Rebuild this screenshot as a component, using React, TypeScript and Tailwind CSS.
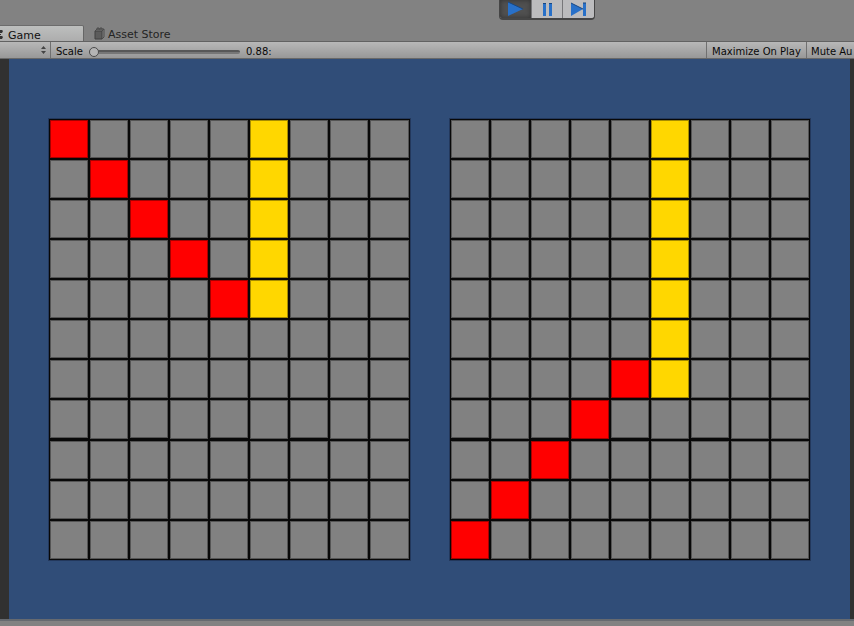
import { useState } from "react";

type Cell = "empty" | "red" | "yellow";

const COLUMNS = 9;
const ROWS = 11;

const fills: Record<Cell, string> = {
  empty: "bg-[#818181]",
  red: "bg-[#ff0000]",
  yellow: "bg-[#ffd700]",
};

function leftCell(row: number, col: number): Cell {
  if (col === 5 && row < 5) return "yellow";
  return row === col && row < 5 ? "red" : "empty";
}

function rightCell(row: number, col: number): Cell {
  if (col === 5 && row < 7) return "yellow";
  return row + col === 10 && col < 5 ? "red" : "empty";
}

function Board({ cellAt }: { cellAt: (row: number, col: number) => Cell }) {
  return (
    <div className="grid min-w-0 flex-1 grid-cols-9 bg-[#080808] outline outline-[#1b2c49]/60">
      {Array.from({ length: ROWS * COLUMNS }, (_, i) => (
        <div
          key={i}
          className={`aspect-square border border-[#080808] inset-shadow-[0_0_0_1px_rgba(0,0,0,0.35)] ${fills[cellAt(Math.floor(i / COLUMNS), i % COLUMNS)]}`}
        />
      ))}
    </div>
  );
}

function PlayControls() {
  return (
    <div className="ml-[499px] flex h-5 w-24 overflow-hidden rounded-b-sm border-x border-b-2 border-[#454545] bg-[#bcbcbe]">
      <button aria-label="Play" className="flex flex-1 justify-center bg-[#505050] inset-shadow-[0_0_5px_#303030]">
        <svg width="16" height="18" viewBox="0 0 16 18">
          <path d="M1 2 16 9 1 16Z" fill="#2870c8" />
          <path d="M1 2 16 9" stroke="#174782" />
        </svg>
      </button>
      <button aria-label="Pause" className="flex flex-1 justify-center border-l border-[#77777a]">
        <svg width="10" height="18" viewBox="0 0 10 18">
          <path d="M1 3h3v13H1ZM7 3h3v13H7Z" fill="#2870c8" />
          <path d="M1 3h3v1H1ZM7 3h3v1H7Z" fill="#174782" />
        </svg>
      </button>
      <button aria-label="Step" className="flex flex-1 justify-center border-l border-[#77777a]">
        <svg width="16" height="18" viewBox="0 0 16 18">
          <path d="M0 3 12 9 0 16ZM12 3h3v13h-3Z" fill="#2870c8" />
          <path d="M0 3 12 9M12 3h3" stroke="#174782" />
        </svg>
      </button>
    </div>
  );
}

function Tabs() {
  return (
    <div className="flex h-4 text-[11px] leading-4 text-[#111111]">
      <button className="flex h-4 w-21 items-center rounded-tr-xs border-t border-r border-t-[#6c6c6c] border-r-[#666666] bg-linear-to-b from-[#bdbfbe] to-[#adadad]">
        <svg width="8" height="14" viewBox="0 0 8 14" className="shrink-0">
          <path d="M0 3h2l1 1-1 2H0ZM0 9h2l1 1-1 2H0ZM0 7h1v1H0Z" fill="#333333" />
        </svg>
        <span className="pt-1">Game</span>
      </button>
      <button className="ml-2 flex items-center gap-[3px] pl-0.5 text-[#242424]">
        <svg width="11" height="14" viewBox="0 0 11 14" fill="none" className="shrink-0">
          <path d="M1 5h7v8H1Z" fill="#5c5c5c" stroke="#414141" />
          <path d="m8 5 2-2v8l-2 2M1 5l2-2h7M3 4V2h2v2M6 4V2h2v2" stroke="#4c4c4c" />
        </svg>
        <span className="pt-1">Asset Store</span>
      </button>
    </div>
  );
}

function Toolbar() {
  const [scale, setScale] = useState(0);
  return (
    <div className="flex h-[18px] items-stretch overflow-hidden border-t border-b border-t-[#626262] border-b-[#686868] bg-linear-to-b from-[#b8b8b8] to-[#989898] text-[10px] leading-[19px] text-[#080808]">
      <div className="relative w-[51px] shrink-0 border-r border-[#707070]">
        <select aria-label="Aspect ratio" className="h-full w-full appearance-none bg-transparent">
          <option aria-label="Free Aspect" />
        </select>
        <svg width="5" height="8" viewBox="0 0 5 8" className="pointer-events-none absolute top-1 right-1">
          <path d="M0 3 2.5 0 5 3ZM0 5h5L2.5 8Z" fill="#444444" />
        </svg>
      </div>
      <label htmlFor="scale" className="w-[38px] shrink-0 pl-[5px]">Scale</label>
      <input
        id="scale"
        type="range"
        min="0"
        max="100"
        value={scale}
        onChange={(e) => setScale(Number(e.target.value))}
        className="h-5 w-[151px] shrink-0 appearance-none bg-transparent [&::-webkit-slider-runnable-track]:h-1 [&::-webkit-slider-runnable-track]:rounded-full [&::-webkit-slider-runnable-track]:border-t-2 [&::-webkit-slider-runnable-track]:border-[#585858] [&::-webkit-slider-runnable-track]:bg-[#777777] [&::-webkit-slider-thumb]:-mt-[5px] [&::-webkit-slider-thumb]:size-2.5 [&::-webkit-slider-thumb]:appearance-none [&::-webkit-slider-thumb]:rounded-full [&::-webkit-slider-thumb]:border [&::-webkit-slider-thumb]:border-[#4c4c4c] [&::-webkit-slider-thumb]:bg-[#b4b4b4]"
      />
      <output htmlFor="scale" className="ml-1.5">0.88:</output>
      <button className="ml-auto w-[100px] shrink-0 border-l border-[#707070] whitespace-nowrap">Maximize On Play</button>
      <button className="w-12 shrink-0 border-l border-[#707070] pl-1 text-left whitespace-nowrap">Mute Au</button>
    </div>
  );
}

export default function App() {
  return (
    <div className="flex min-h-screen flex-col overflow-hidden bg-[#828282] font-['DejaVu_Sans',sans-serif]">
      <header>
        <PlayControls />
        <div className="pt-[5px]">
          <Tabs />
        </div>
        <Toolbar />
      </header>
      <main className="flex flex-1 bg-[#313131] pr-1 pl-[9px]">
        <div className="flex flex-1 items-start gap-10 bg-[#304d78] px-10 pt-[60px] pb-[59px]">
          <Board cellAt={leftCell} />
          <Board cellAt={rightCell} />
        </div>
      </main>
      <footer className="h-[7px] border-t-2 border-[#666a70] bg-[#828282]" />
    </div>
  );
}
